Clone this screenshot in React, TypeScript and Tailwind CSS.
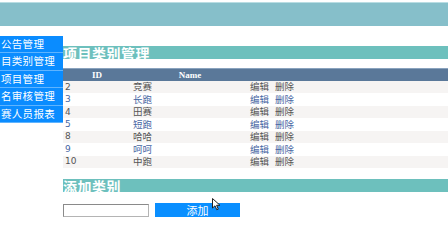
const NAV = ["公告管理", "目类别管理", "项目管理", "名审核管理", "赛人员报表"];

const ROWS: Array<[number, string]> = [
  [2, "竞赛"],
  [3, "长跑"],
  [4, "田赛"],
  [5, "短跑"],
  [8, "哈哈"],
  [9, "呵呵"],
  [10, "中跑"],
];

const CJK = "font-['Noto_Sans_CJK_SC',sans-serif]";

function SectionBar({ title }: { title: string }) {
  return (
    <div
      className={`flex h-[13px] items-center bg-[#6dc0bd] text-[14px] font-bold leading-none tracking-[0.5px] text-white ${CJK}`}
    >
      {title}
    </div>
  );
}

export default function App() {
  return (
    <div className="relative h-[252px] w-[448px] overflow-hidden bg-white">
      <div className="mt-[2px] h-[24px] border-t border-[#b9dde3] bg-[#86bfca]" />

      <div className="flex items-start">
        <nav className="mt-[10px] w-[63px] shrink-0 bg-[#0a8cff]">
          {NAV.map((label) => (
            <div
              key={label}
              className={`flex h-[17.4px] items-center overflow-hidden whitespace-nowrap border-b border-[#5fb4ff] pl-[1px] text-[10.5px] leading-none tracking-[0.3px] text-white ${CJK}`}
            >
              {label}
            </div>
          ))}
        </nav>

        <main className="mt-[20px] flex-1">
          <SectionBar title="项目类别管理" />

          <div className="mt-[9px] flex h-[13px] items-center border-t border-[#8aa3be] bg-[#5a7899] font-['Liberation_Serif',serif] text-[9px] font-bold leading-none text-white">
            <span className="w-[68px] text-center">ID</span>
            <span className="w-[118px] text-center">Name</span>
          </div>

          {ROWS.map(([id, name], i) => {
            const tone = i % 2 === 0 ? "bg-[#f6f4f3] text-[#555]" : "bg-white text-[#4766a3]";
            return (
              <div key={id} className={`flex h-[12.45px] items-center text-[9.5px] leading-none ${tone}`}>
                <span className="w-[68px] pl-[2px] font-['DejaVu_Sans',sans-serif] text-[9px]">{id}</span>
                <span className={`w-[118px] pl-[2px] ${CJK}`}>{name}</span>
                <span className={`pl-[1px] ${CJK}`}>
                  编辑<span className="ml-[6px]">删除</span>
                </span>
              </div>
            );
          })}

          <div className="mt-[11px]">
            <SectionBar title="添加类别" />
          </div>

          <div className="mt-[11px] flex items-start gap-[6px]">
            <input
              className="mt-[1px] h-[13px] w-[86px] border border-[#b4b4b4] border-l-[#8a8a8a] border-t-[#8a8a8a] bg-white"
              type="text"
            />
            <button
              className={`flex h-[14px] w-[85px] items-center justify-center bg-[#0a8fff] text-[11px] leading-none text-white ${CJK}`}
            >
              添加
            </button>
          </div>
        </main>
      </div>

      {/* mouse cursor over the add button */}
      <svg
        className="absolute left-[212px] top-[198px]"
        width="9"
        height="13"
        viewBox="0 0 9 13"
      >
        <path d="M0.5 0.5 L0.5 10 L3 7.8 L4.8 11.8 L6.3 11.1 L4.6 7.3 L8 7.3 Z" fill="#fff" stroke="#222" strokeWidth="1" />
      </svg>
    </div>
  );
}
